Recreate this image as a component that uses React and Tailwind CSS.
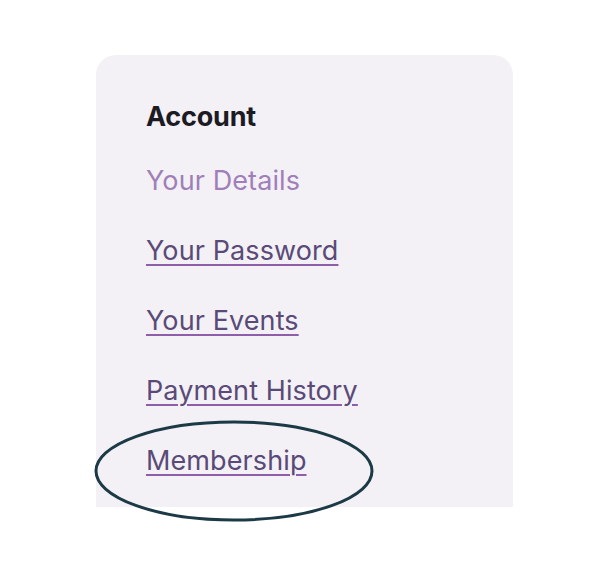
import React from 'react';

const links = ['Your Password', 'Your Events', 'Payment History'];

export default function App() {
    return (
        <div className="w-[600px] h-[586px] bg-white font-['Inter',sans-serif]">
            <div className="pl-[96px] pt-[55px]">
                <div className="relative w-[417px] h-[452px] bg-[#f3f1f6] rounded-t-[20px] pl-[50px] pt-[45px]">
                    <h3 className="text-[27px] leading-[34px] font-bold text-[#1c1b24] tracking-[-0.2px]">Account</h3>
                    <ul className="mt-[30px] flex flex-col gap-[36px] text-[27px] leading-[34px] tracking-[0.1px]">
                        <li className="text-[#a07fb9]">Your Details</li>
                        {links.map((label) => (
                            <li key={label}>
                                <a href="#" className="text-[#5a4a78] underline decoration-[#8e5fa8] decoration-2 underline-offset-[4px]">{label}</a>
                            </li>
                        ))}
                        <li className="relative">
                            <a href="#" className="text-[#5a4a78] underline decoration-[#8e5fa8] decoration-2 underline-offset-[4px]">Membership</a>
                            {/* annotation circle */}
                            <svg className="absolute left-[-53px] top-[-25px] pointer-events-none" width="282" height="104" viewBox="0 0 282 104">
                                <ellipse cx="141" cy="52" rx="138" ry="49" fill="none" stroke="#1c3a45" strokeWidth="3" />
                            </svg>
                        </li>
                    </ul>
                </div>
            </div>
        </div>
    );
}
